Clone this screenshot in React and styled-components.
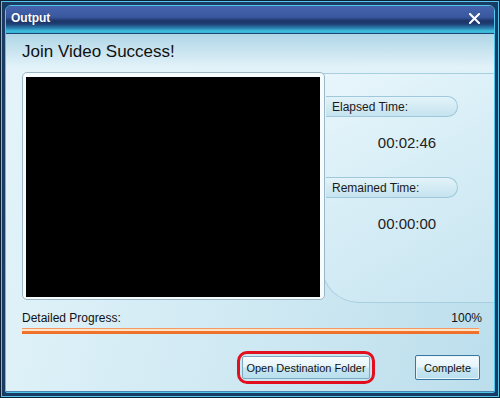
import React from "react"
import styled, { createGlobalStyle } from "styled-components"

const Global = createGlobalStyle`
  body {
    margin: 0;
    background: #0d2238;
    font-family: "Liberation Sans", Arial, sans-serif;
  }
`

const Frame = styled.div`
  box-sizing: border-box;
  width: 500px;
  height: 398px;
  padding: 4px;
  background: #1a3b63;
  border: 1px solid #0c2036;
  box-shadow: inset 0 0 0 1px #55c6ea;
`

const Win = styled.div`
  box-sizing: border-box;
  height: 100%;
  display: flex;
  flex-direction: column;
  border: 1px solid #4fc6ec;
  border-radius: 6px 6px 2px 2px;
  overflow: hidden;
`

const TitleBar = styled.div`
  height: 27px;
  flex: none;
  display: flex;
  align-items: center;
  justify-content: space-between;
  padding: 0 14px 0 5px;
  border-bottom: 1px solid #1f4676;
  background: linear-gradient(
    180deg,
    #4564ad 0px,
    #3a589f 11px,
    #1c3466 15px,
    #1f3f74 18px,
    #2b7fb0 22px,
    #3dbfdc 25px,
    #38b4d6 27px
  );
`

const Caption = styled.span`
  color: #fff;
  font-weight: bold;
  font-size: 12px;
  margin-top: -4px;
  text-shadow: 0 0 1px #1c2f5a;
`

const Close = styled.svg`
  width: 11px;
  height: 11px;
  margin-top: -2px;
`

const Content = styled.div`
  flex: 1;
  display: flex;
  flex-direction: column;
  padding: 8px 12px 0 16px;
  border-bottom: 1px solid #4a84b2;
  background:
    linear-gradient(180deg, #afd6e6 0px, rgba(228, 243, 250, 0.95) 34px, rgba(228, 243, 250, 0) 90px),
    linear-gradient(105deg, #e4f4fa 0%, #cfe9f3 55%, #bcdeec 100%);
`

const Heading = styled.h1`
  margin: 0;
  font-size: 17px;
  line-height: 20px;
  font-weight: normal;
  color: #111;
`

const MainRow = styled.div`
  display: flex;
  align-items: flex-start;
  margin: 10px -12px 0 0;
`

const VideoFrame = styled.div`
  position: relative;
  z-index: 1;
  box-sizing: border-box;
  width: 303px;
  height: 228px;
  flex: none;
  padding: 4px 4px 2px 3px;
  background: #f6fbfd;
  border: 1px solid #9bb6c4;
  border-radius: 5px;
`

const Screen = styled.div`
  width: 100%;
  height: 100%;
  background: #000;
`

const SidePanel = styled.div`
  box-sizing: border-box;
  flex: 1;
  height: 230px;
  margin: 1px 0 0 -4px;
  padding: 22px 0 0 4px;
  border: 1px solid #a7cfe0;
  border-right: none;
  border-radius: 0 0 0 38px;
  background: linear-gradient(150deg, #e8f6fb 0%, #d6edf6 50%, #c8e5f1 100%);
`

const Pill = styled.div`
  box-sizing: border-box;
  width: 132px;
  height: 21px;
  margin-top: ${p => p.$gap}px;
  display: flex;
  align-items: center;
  padding-left: 6px;
  font-size: 12px;
  color: #1a1a1a;
  border: 1px solid #9fc8da;
  border-left: none;
  border-radius: 0 11px 11px 0;
  background: linear-gradient(180deg, #e3f3f9 0%, #d4ebf4 50%, #c5e3ef 100%);
`

const Value = styled.div`
  margin-top: 17px;
  padding-right: 6px;
  text-align: center;
  font-size: 15px;
  line-height: 18px;
  color: #222;
`

const ProgressHead = styled.div`
  display: flex;
  justify-content: space-between;
  margin-top: 8px;
  font-size: 12px;
  line-height: 15px;
  color: #111;
`

const Bar = styled.div`
  height: 6px;
  margin: 2px 3px 0 0;
  background: linear-gradient(
    180deg,
    #f39a62 0px,
    #f39a62 1px,
    #ffe3c8 1px,
    #ffe3c8 3px,
    #f2772f 3px,
    #ee6e26 6px
  );
`

const Buttons = styled.div`
  display: flex;
  justify-content: flex-end;
  align-items: center;
  margin: 17px 2px 0 0;
`

const Ring = styled.div`
  display: flex;
  padding: 2px;
  border: 3px solid #e2101e;
  border-radius: 10px;
  margin-right: 40px;
`

const Button = styled.button`
  box-sizing: border-box;
  width: ${p => p.$w}px;
  height: ${p => p.$h}px;
  padding: 0;
  white-space: nowrap;
  font-family: "Liberation Sans", Arial, sans-serif;
  font-size: 11px;
  color: #111;
  border: 1px solid ${p => (p.$strong ? "#3a78a2" : "#7ea9c0")};
  border-radius: 2px;
  box-shadow: inset 0 0 0 1px ${p => (p.$strong ? "#e8f6fb" : "transparent")};
  background: linear-gradient(180deg, #f6fcfe 0%, #e4f4fa 48%, #c9e7f2 52%, #b9dfee 100%);
`

const CloseIcon = () => (
  <Close viewBox="0 0 11 11">
    <path d="M1 1 L10 10 M10 1 L1 10" stroke="#fff" strokeWidth="2" strokeLinecap="square" />
  </Close>
)

export default function App() {
  return (
    <>
      <Global />
      <Frame>
        <Win>
          <TitleBar>
            <Caption>Output</Caption>
            <CloseIcon />
          </TitleBar>
          <Content>
            <Heading>Join Video Success!</Heading>
            <MainRow>
              <VideoFrame>
                <Screen />
              </VideoFrame>
              <SidePanel>
                <Pill $gap={0}>Elapsed Time:</Pill>
                <Value>00:02:46</Value>
                <Pill $gap={25}>Remained Time:</Pill>
                <Value>00:00:00</Value>
              </SidePanel>
            </MainRow>
            <ProgressHead>
              <span>Detailed Progress:</span>
              <span>100%</span>
            </ProgressHead>
            <Bar />
            <Buttons>
              <Ring>
                <Button $w={128} $h={23}>Open Destination Folder</Button>
              </Ring>
              <Button $w={65} $h={25} $strong>Complete</Button>
            </Buttons>
          </Content>
        </Win>
      </Frame>
    </>
  )
}
